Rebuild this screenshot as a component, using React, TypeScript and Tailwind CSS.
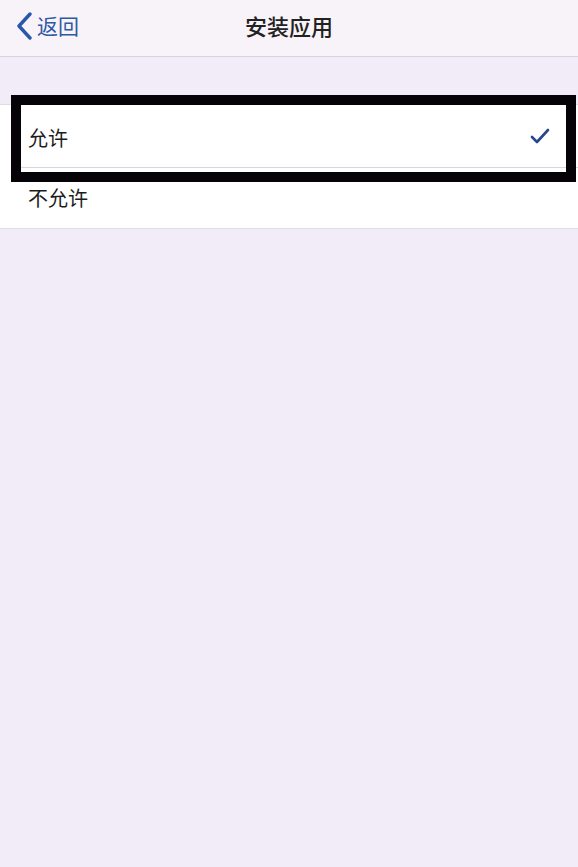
const font = "font-['Noto_Sans_CJK_SC',sans-serif]";

function ChevronLeft() {
  return (
    <svg width="17" height="28" viewBox="0 0 17 28" fill="none">
      <path d="M14 2L3 14l11 12" stroke="#2857ad" strokeWidth="3.4" strokeLinecap="round" strokeLinejoin="round" />
    </svg>
  );
}

function Check() {
  return (
    <svg width="20" height="16" viewBox="0 0 20 16" fill="none">
      <path d="M2 9l5 5L18 2" stroke="#23488f" strokeWidth="2.6" strokeLinecap="round" strokeLinejoin="round" />
    </svg>
  );
}

export default function App() {
  return (
    <div className={`w-[578px] h-[867px] bg-[#f2ecf9] flex flex-col ${font}`}>
      {/* Nav bar */}
      <div className="relative h-[57px] bg-[#f8f3f9] border-b border-[#d8d4dc] flex items-center justify-center shrink-0">
        <div className="absolute left-[16px] top-[12px] flex items-center gap-[4px]">
          <ChevronLeft />
          <span className="text-[21px] leading-none text-[#2e5aa3] -mt-[1px]">返回</span>
        </div>
        <span className="text-[22px] leading-none text-[#222] font-medium -mt-[6px]">安装应用</span>
      </div>

      <div className="h-[47px] shrink-0" />

      {/* Options */}
      <div className="relative bg-white border-y border-[#e0dce4]">
        <div className="h-[62px] flex items-center justify-between pl-[28px] pr-[28px]">
          <span className="text-[20px] text-[#1c1c1c] mt-[4px]">允许</span>
          <Check />
        </div>
        <div className="ml-[20px] h-px bg-[#d9d7dd]" />
        <div className="h-[60px] flex items-center pl-[28px]">
          <span className="text-[20px] text-[#1c1c1c]">不允许</span>
        </div>

        {/* Annotation box */}
        <div className="absolute left-[11px] top-[-10px] w-[565px] h-[87px] border-[10px] border-[#050307]" />
      </div>
    </div>
  );
}
